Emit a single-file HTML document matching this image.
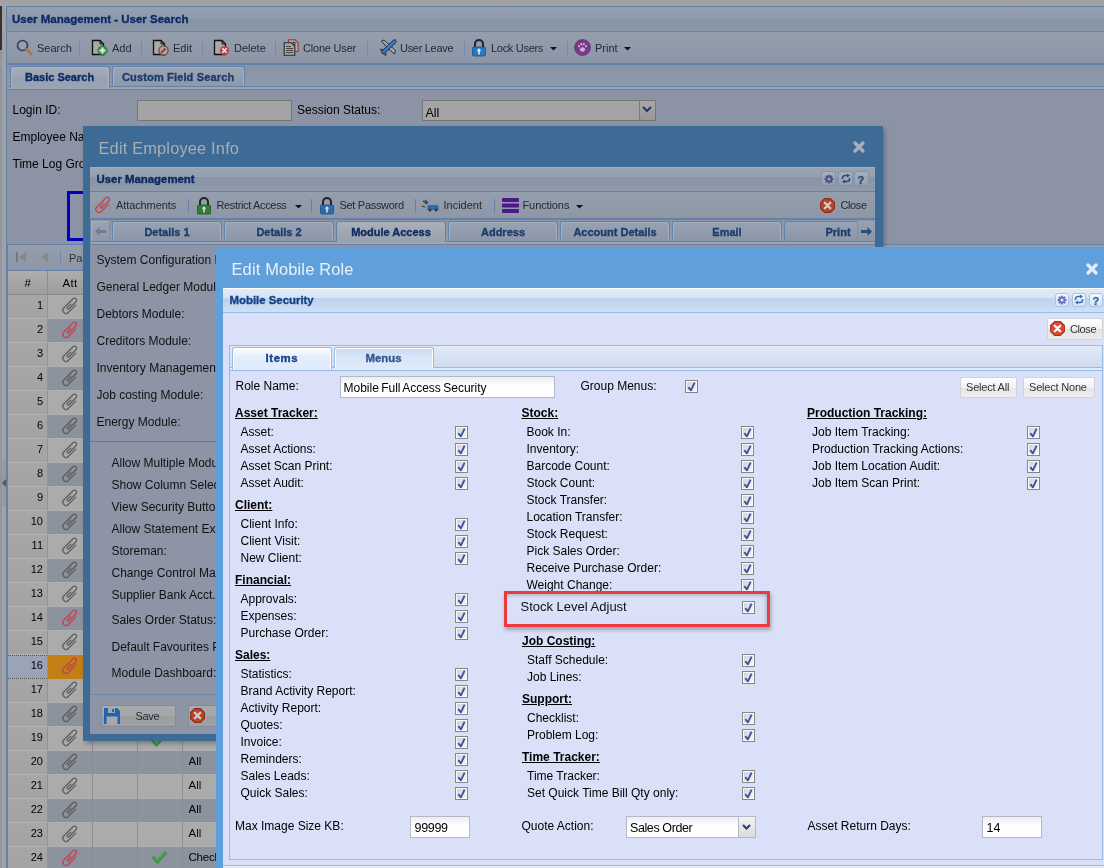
<!DOCTYPE html>
<html><head><meta charset="utf-8">
<style>
*{box-sizing:border-box;margin:0;padding:0}
html,body{width:1104px;height:868px;overflow:hidden;background:#a2a2a2;font-family:"Liberation Sans",sans-serif;position:relative}
.a{position:absolute}
.t{position:absolute;white-space:nowrap;color:#000}
svg{position:absolute;overflow:visible}
</style></head><body><div style="position:absolute;left:0;top:0;width:1104px;height:868px;overflow:hidden;will-change:transform">

<div class="a" style="left:0px;top:6px;width:2px;height:44px;background:#333"></div>
<div class="a" style="left:0px;top:50px;width:2px;height:818px;background:#8d95a6"></div>
<div class="a" style="left:2px;top:459px;width:4px;height:47px;background:#9a9a9a"></div>
<svg style="left:2px;top:478px;" width="4" height="10" viewBox="0 0 4 10"><path d="M0 5 L4 1 V9 Z" fill="#555"/></svg>
<div class="a" style="left:6px;top:6px;width:1098px;height:862px;background:#8b93a5;border-left:1px solid #6482a9;border-top:1px solid #6482a9"></div>
<div class="a" style="left:7px;top:7px;width:1097px;height:25px;background:linear-gradient(#959fae,#8f9aab 50%,#8694a7 52%,#8d98aa);border-bottom:1px solid #6482a9"></div>
<div class="t " style="left:12px;top:12.02px;font-size:11.5px;line-height:14px;font-weight:bold;-webkit-text-stroke:.35px #0b2c66;color:#0b2c66;">User Management - User Search</div>
<div class="a" style="left:7px;top:32px;width:1097px;height:31px;background:linear-gradient(#949eac,#8c96a7)"></div>
<div class="a" style="left:7px;top:63px;width:1097px;height:2px;background:#6482a9"></div>
<svg style="left:16px;top:39px;" width="16" height="16" viewBox="0 0 16 16"><circle cx="6.5" cy="6.5" r="5" fill="#9aa0aa" stroke="#2c3a66" stroke-width="1.6"/><line x1="10.5" y1="10.5" x2="15" y2="15" stroke="#a87a40" stroke-width="3" stroke-linecap="round"/></svg>
<div class="t " style="left:37px;top:40.99px;font-size:11px;line-height:14px;color:#262a30;">Search</div>
<div class="a" style="left:79px;top:41px;width:1px;height:14px;background:#6d8ab0"></div>
<svg style="left:91px;top:39px;" width="16" height="17" viewBox="0 0 16 17"><path d="M1.5 1.5 H9 L12.5 5 V15.5 H1.5 Z" fill="#a9a9a9" stroke="#111" stroke-width="1.3"/><path d="M9 1.5 V5 H12.5" fill="none" stroke="#111" stroke-width="1"/><circle cx="11.5" cy="11.5" r="4.6" fill="#3a9a48" stroke="#1f6e2a" stroke-width=".8"/><path d="M11.5 8.5 V14.5 M8.5 11.5 H14.5" stroke="#e8e8e8" stroke-width="2"/></svg>
<div class="t " style="left:112px;top:40.99px;font-size:11px;line-height:14px;color:#262a30;">Add</div>
<div class="a" style="left:141px;top:41px;width:1px;height:14px;background:#6d8ab0"></div>
<svg style="left:152px;top:39px;" width="16" height="17" viewBox="0 0 16 17"><path d="M1.5 1.5 H9 L12.5 5 V15.5 H1.5 Z" fill="#a9a9a9" stroke="#111" stroke-width="1.3"/><path d="M9 1.5 V5 H12.5" fill="none" stroke="#111" stroke-width="1"/><circle cx="11.5" cy="11.5" r="4.6" fill="#a9a9a9" stroke="#5a4a4a" stroke-width="1.2"/><path d="M9 14 L13.5 9.5" stroke="#b03a2a" stroke-width="2.2"/></svg>
<div class="t " style="left:173px;top:40.99px;font-size:11px;line-height:14px;color:#262a30;">Edit</div>
<div class="a" style="left:202px;top:41px;width:1px;height:14px;background:#6d8ab0"></div>
<svg style="left:213px;top:39px;" width="16" height="17" viewBox="0 0 16 17"><path d="M1.5 1.5 H9 L12.5 5 V15.5 H1.5 Z" fill="#a9a9a9" stroke="#111" stroke-width="1.3"/><path d="M9 1.5 V5 H12.5" fill="none" stroke="#111" stroke-width="1"/><circle cx="11.5" cy="11.5" r="4.6" fill="#c0404a"/><path d="M9.3 9.3 L13.7 13.7 M13.7 9.3 L9.3 13.7" stroke="#e8e8e8" stroke-width="1.6"/></svg>
<div class="t " style="left:234px;top:40.99px;font-size:11px;line-height:14px;color:#262a30;">Delete</div>
<div class="a" style="left:275px;top:41px;width:1px;height:14px;background:#6d8ab0"></div>
<svg style="left:283px;top:39px;" width="16" height="17" viewBox="0 0 16 17"><path d="M5.5 .8 H12 L15.2 4 V12.5 H5.5 Z" fill="#a9a9a9" stroke="#b03038" stroke-width="1.1"/><path d="M1.2 3.8 H8.5 L11.8 7 V16.2 H1.2 Z" fill="#a5a5a5" stroke="#2a2a2a" stroke-width="1.1"/><path d="M3 7.5 H8 M3 9.5 H10 M3 11.5 H10 M3 13.5 H10" stroke="#3a3a3a" stroke-width=".9"/><circle cx="11" cy="4.5" r="1.3" fill="none" stroke="#222" stroke-width=".9"/></svg>
<div class="t " style="left:303px;top:40.99px;font-size:11px;line-height:14px;color:#262a30;letter-spacing:-.2px">Clone User</div>
<div class="a" style="left:367px;top:41px;width:1px;height:14px;background:#6d8ab0"></div>
<svg style="left:375px;top:35px;" width="25" height="25" viewBox="0 0 25 25"><path d="M6.5 6 L9 5 L14.5 10 L20.5 15.5 L19.5 19 L12.5 13 Z" fill="#a0aab2" stroke="#222" stroke-width=".9" stroke-linejoin="round"/><path d="M5.3 14.5 L7 14 L9.5 16.5 L11.3 19.8 L10 20.5 L7.5 17.5 Z" fill="#a0aab2" stroke="#222" stroke-width=".9" stroke-linejoin="round"/><path d="M8.5 17 L19.5 6.5" stroke="#1a2a40" stroke-width="4.2" stroke-linecap="round"/><path d="M8.5 17 L19.5 6.5" stroke="#3d7cc4" stroke-width="2.6" stroke-linecap="round"/></svg>
<div class="t " style="left:400px;top:40.99px;font-size:11px;line-height:14px;color:#262a30;letter-spacing:-.3px">User Leave</div>
<div class="a" style="left:464px;top:41px;width:1px;height:14px;background:#6d8ab0"></div>
<svg style="left:471px;top:39px;" width="16" height="17" viewBox="0 0 16 17"><path d="M4 8 V5 A4 4 0 0 1 12 5 V8" fill="none" stroke="#222" stroke-width="2"/><rect x="1.5" y="8" width="13" height="9" rx="1.2" fill="#2a78c0" stroke="#1d4f86" stroke-width=".8"/><circle cx="8" cy="11.2" r="1.6" fill="#e6e6e6"/><rect x="7.2" y="11.5" width="1.6" height="4" fill="#e6e6e6"/></svg>
<div class="t " style="left:491px;top:40.99px;font-size:11px;line-height:14px;color:#262a30;letter-spacing:-.3px">Lock Users</div>
<svg style="left:550px;top:47px;" width="7" height="4" viewBox="0 0 7 4"><path d="M0 0 H7 L3.5 3.5 Z" fill="#111"/></svg>
<div class="a" style="left:567px;top:41px;width:1px;height:14px;background:#6d8ab0"></div>
<svg style="left:574px;top:39px;" width="17" height="17" viewBox="0 0 17 17"><circle cx="8.5" cy="8.5" r="8" fill="#7a3a8a" stroke="#5a2a6a" stroke-width=".6"/><ellipse cx="8.5" cy="10.5" rx="2.6" ry="2.2" fill="#c8b0d0"/><circle cx="5" cy="7.2" r="1.1" fill="#c8b0d0"/><circle cx="7.3" cy="5.2" r="1.1" fill="#c8b0d0"/><circle cx="9.8" cy="5.2" r="1.1" fill="#c8b0d0"/><circle cx="12" cy="7.2" r="1.1" fill="#c8b0d0"/></svg>
<div class="t " style="left:595px;top:40.99px;font-size:11px;line-height:14px;color:#262a30;">Print</div>
<svg style="left:624px;top:47px;" width="7" height="4" viewBox="0 0 7 4"><path d="M0 0 H7 L3.5 3.5 Z" fill="#111"/></svg>
<div class="a" style="left:7px;top:65px;width:1097px;height:21px;background:linear-gradient(#8893a6,#8f9aab)"></div>
<div class="a" style="left:7px;top:86px;width:1097px;height:1px;background:#6482a9"></div>
<div class="a" style="left:7px;top:87px;width:1097px;height:2px;background:#9aa3b2"></div>
<div class="a" style="left:7px;top:89px;width:1097px;height:1px;background:#6482a9"></div>
<div class="a" style="left:10px;top:66px;width:100px;height:22px;background:linear-gradient(#a6aeba,#98a1b2 60%,#9aa3b2);border:1px solid #6482a9;border-bottom:none;border-radius:3px 3px 0 0;box-shadow:inset 1px 1px 0 #b0b4ba,inset -1px 0 0 #b0b4ba"></div>
<div class="t " style="left:25px;top:70.19px;font-size:11px;line-height:14px;font-weight:bold;-webkit-text-stroke:.35px #0b2c66;color:#0b2c66;">Basic Search</div>
<div class="a" style="left:112px;top:66px;width:133px;height:20px;background:linear-gradient(#9ba5b4,#8d98aa);border:1px solid #6482a9;border-bottom:none;border-radius:3px 3px 0 0;box-shadow:inset 1px 1px 0 #aab0b9,inset -1px 0 0 #aab0b9"></div>
<div class="t " style="left:122px;top:70.19px;font-size:11px;line-height:14px;font-weight:bold;-webkit-text-stroke:.35px #1d3c6c;color:#1d3c6c;letter-spacing:.15px">Custom Field Search</div>
<div class="t " style="left:12.5px;top:103.34px;font-size:12px;line-height:15px;color:#000;">Login ID:</div>
<div class="a" style="left:137px;top:100px;width:155px;height:21px;background:#a4a4a4;border:1px solid #767676"></div>
<div class="t " style="left:297px;top:103.34px;font-size:12px;line-height:15px;color:#000;">Session Status:</div>
<div class="a" style="left:422px;top:100px;width:234px;height:21px;background:#a4a4a4;border:1px solid #767676"></div>
<div class="t " style="left:425.5px;top:104.67px;font-size:12.5px;line-height:16px;color:#000;">All</div>
<div class="a" style="left:639px;top:101px;width:16px;height:19px;background:linear-gradient(#a8a8a8,#979797);border-left:1px solid #7a7a7a"></div>
<svg style="left:643px;top:107px;" width="8" height="5" viewBox="0 0 8 5"><path d="M0 0 L4 4 L8 0" fill="none" stroke="#1e3566" stroke-width="2"/></svg>
<div class="t " style="left:12.5px;top:130.34px;font-size:12px;line-height:15px;color:#000;">Employee Name:</div>
<div class="t " style="left:12.5px;top:157.34px;font-size:12px;line-height:15px;color:#000;">Time Log Group:</div>
<div class="a" style="left:67px;top:191px;width:60px;height:50px;border:3px solid #0000bf"></div>
<div class="a" style="left:7px;top:244px;width:1097px;height:27px;background:linear-gradient(#949eac,#8c96a7);border-top:1px solid #6482a9;border-bottom:1px solid #6482a9"></div>
<svg style="left:16px;top:252px;" width="10" height="10" viewBox="0 0 10 10"><rect x="0" y="0" width="2" height="10" fill="#777"/><path d="M10 0 V10 L3 5 Z" fill="#888"/></svg>
<svg style="left:41px;top:252px;" width="7" height="10" viewBox="0 0 7 10"><path d="M7 0 V10 L0 5 Z" fill="#888"/></svg>
<div class="a" style="left:60px;top:251px;width:1px;height:14px;background:#6d8ab0"></div>
<div class="t " style="left:69px;top:251.19px;font-size:11px;line-height:14px;color:#333;">Page</div>
<div class="a" style="left:7px;top:271px;width:1097px;height:24px;background:linear-gradient(#aeaeae,#9d9d9d);border-bottom:1px solid #8a8a8a"></div>
<div class="t " style="left:24.5px;top:276.02px;font-size:11.5px;line-height:14px;color:#000;">#</div>
<div class="t " style="left:62.5px;top:276.02px;font-size:11.5px;line-height:14px;color:#000;letter-spacing:.3px">Att</div>
<div class="a" style="left:47px;top:271px;width:1px;height:24px;background:#8d8d8d"></div>
<div class="a" style="left:92px;top:271px;width:1px;height:24px;background:#8d8d8d"></div>
<div class="a" style="left:7px;top:295px;width:1097px;height:24px;background:#ababab;border-bottom:1px solid #b0b0b0"></div>
<div class="a" style="left:7px;top:295px;width:40px;height:24px;background:linear-gradient(#a7a7a7,#a3a3a3);border-bottom:1px solid #b2b2b2"></div>
<div class="a" style="left:47px;top:295px;width:1px;height:24px;background:#939393"></div>
<div class="t" style="left:7px;width:36px;text-align:right;top:299px;font-size:11px;line-height:13px;color:#000">1</div>
<svg style="left:58px;top:295px;" width="24" height="24" viewBox="0 0 24 24"><g transform="translate(12.3 11) rotate(-45)"><path d="M4.4 3.2 L-6 3.2 A3.2 3.2 0 0 1 -6 -3.2 L7 -3.2 A2.1 2.1 0 0 1 7 1 L-3 1 A1 1 0 0 1 -3 -1 L1.6 -1" fill="none" stroke="#5c5c5c" stroke-width="1.25" stroke-linecap="round"/></g></svg>
<div class="a" style="left:7px;top:319px;width:1097px;height:24px;background:#8c929e;border-bottom:1px solid #b0b0b0"></div>
<div class="a" style="left:7px;top:319px;width:40px;height:24px;background:linear-gradient(#a7a7a7,#a3a3a3);border-bottom:1px solid #b2b2b2"></div>
<div class="a" style="left:47px;top:319px;width:1px;height:24px;background:#939393"></div>
<div class="t" style="left:7px;width:36px;text-align:right;top:323px;font-size:11px;line-height:13px;color:#000">2</div>
<svg style="left:58px;top:319px;" width="24" height="24" viewBox="0 0 24 24"><g transform="translate(12.3 11) rotate(-45)"><path d="M4.4 3.2 L-6 3.2 A3.2 3.2 0 0 1 -6 -3.2 L7 -3.2 A2.1 2.1 0 0 1 7 1 L-3 1 A1 1 0 0 1 -3 -1 L1.6 -1" fill="none" stroke="#c0444c" stroke-width="1.25" stroke-linecap="round"/></g></svg>
<div class="a" style="left:7px;top:343px;width:1097px;height:24px;background:#ababab;border-bottom:1px solid #b0b0b0"></div>
<div class="a" style="left:7px;top:343px;width:40px;height:24px;background:linear-gradient(#a7a7a7,#a3a3a3);border-bottom:1px solid #b2b2b2"></div>
<div class="a" style="left:47px;top:343px;width:1px;height:24px;background:#939393"></div>
<div class="t" style="left:7px;width:36px;text-align:right;top:347px;font-size:11px;line-height:13px;color:#000">3</div>
<svg style="left:58px;top:343px;" width="24" height="24" viewBox="0 0 24 24"><g transform="translate(12.3 11) rotate(-45)"><path d="M4.4 3.2 L-6 3.2 A3.2 3.2 0 0 1 -6 -3.2 L7 -3.2 A2.1 2.1 0 0 1 7 1 L-3 1 A1 1 0 0 1 -3 -1 L1.6 -1" fill="none" stroke="#5c5c5c" stroke-width="1.25" stroke-linecap="round"/></g></svg>
<div class="a" style="left:7px;top:367px;width:1097px;height:24px;background:#8c929e;border-bottom:1px solid #b0b0b0"></div>
<div class="a" style="left:7px;top:367px;width:40px;height:24px;background:linear-gradient(#a7a7a7,#a3a3a3);border-bottom:1px solid #b2b2b2"></div>
<div class="a" style="left:47px;top:367px;width:1px;height:24px;background:#939393"></div>
<div class="t" style="left:7px;width:36px;text-align:right;top:371px;font-size:11px;line-height:13px;color:#000">4</div>
<svg style="left:58px;top:367px;" width="24" height="24" viewBox="0 0 24 24"><g transform="translate(12.3 11) rotate(-45)"><path d="M4.4 3.2 L-6 3.2 A3.2 3.2 0 0 1 -6 -3.2 L7 -3.2 A2.1 2.1 0 0 1 7 1 L-3 1 A1 1 0 0 1 -3 -1 L1.6 -1" fill="none" stroke="#5c5c5c" stroke-width="1.25" stroke-linecap="round"/></g></svg>
<div class="a" style="left:7px;top:391px;width:1097px;height:24px;background:#ababab;border-bottom:1px solid #b0b0b0"></div>
<div class="a" style="left:7px;top:391px;width:40px;height:24px;background:linear-gradient(#a7a7a7,#a3a3a3);border-bottom:1px solid #b2b2b2"></div>
<div class="a" style="left:47px;top:391px;width:1px;height:24px;background:#939393"></div>
<div class="t" style="left:7px;width:36px;text-align:right;top:395px;font-size:11px;line-height:13px;color:#000">5</div>
<svg style="left:58px;top:391px;" width="24" height="24" viewBox="0 0 24 24"><g transform="translate(12.3 11) rotate(-45)"><path d="M4.4 3.2 L-6 3.2 A3.2 3.2 0 0 1 -6 -3.2 L7 -3.2 A2.1 2.1 0 0 1 7 1 L-3 1 A1 1 0 0 1 -3 -1 L1.6 -1" fill="none" stroke="#5c5c5c" stroke-width="1.25" stroke-linecap="round"/></g></svg>
<div class="a" style="left:7px;top:415px;width:1097px;height:24px;background:#8c929e;border-bottom:1px solid #b0b0b0"></div>
<div class="a" style="left:7px;top:415px;width:40px;height:24px;background:linear-gradient(#a7a7a7,#a3a3a3);border-bottom:1px solid #b2b2b2"></div>
<div class="a" style="left:47px;top:415px;width:1px;height:24px;background:#939393"></div>
<div class="t" style="left:7px;width:36px;text-align:right;top:419px;font-size:11px;line-height:13px;color:#000">6</div>
<svg style="left:58px;top:415px;" width="24" height="24" viewBox="0 0 24 24"><g transform="translate(12.3 11) rotate(-45)"><path d="M4.4 3.2 L-6 3.2 A3.2 3.2 0 0 1 -6 -3.2 L7 -3.2 A2.1 2.1 0 0 1 7 1 L-3 1 A1 1 0 0 1 -3 -1 L1.6 -1" fill="none" stroke="#5c5c5c" stroke-width="1.25" stroke-linecap="round"/></g></svg>
<div class="a" style="left:7px;top:439px;width:1097px;height:24px;background:#ababab;border-bottom:1px solid #b0b0b0"></div>
<div class="a" style="left:7px;top:439px;width:40px;height:24px;background:linear-gradient(#a7a7a7,#a3a3a3);border-bottom:1px solid #b2b2b2"></div>
<div class="a" style="left:47px;top:439px;width:1px;height:24px;background:#939393"></div>
<div class="t" style="left:7px;width:36px;text-align:right;top:443px;font-size:11px;line-height:13px;color:#000">7</div>
<svg style="left:58px;top:439px;" width="24" height="24" viewBox="0 0 24 24"><g transform="translate(12.3 11) rotate(-45)"><path d="M4.4 3.2 L-6 3.2 A3.2 3.2 0 0 1 -6 -3.2 L7 -3.2 A2.1 2.1 0 0 1 7 1 L-3 1 A1 1 0 0 1 -3 -1 L1.6 -1" fill="none" stroke="#5c5c5c" stroke-width="1.25" stroke-linecap="round"/></g></svg>
<div class="a" style="left:7px;top:463px;width:1097px;height:24px;background:#8c929e;border-bottom:1px solid #b0b0b0"></div>
<div class="a" style="left:7px;top:463px;width:40px;height:24px;background:linear-gradient(#a7a7a7,#a3a3a3);border-bottom:1px solid #b2b2b2"></div>
<div class="a" style="left:47px;top:463px;width:1px;height:24px;background:#939393"></div>
<div class="t" style="left:7px;width:36px;text-align:right;top:467px;font-size:11px;line-height:13px;color:#000">8</div>
<svg style="left:58px;top:463px;" width="24" height="24" viewBox="0 0 24 24"><g transform="translate(12.3 11) rotate(-45)"><path d="M4.4 3.2 L-6 3.2 A3.2 3.2 0 0 1 -6 -3.2 L7 -3.2 A2.1 2.1 0 0 1 7 1 L-3 1 A1 1 0 0 1 -3 -1 L1.6 -1" fill="none" stroke="#5c5c5c" stroke-width="1.25" stroke-linecap="round"/></g></svg>
<div class="a" style="left:7px;top:487px;width:1097px;height:24px;background:#ababab;border-bottom:1px solid #b0b0b0"></div>
<div class="a" style="left:7px;top:487px;width:40px;height:24px;background:linear-gradient(#a7a7a7,#a3a3a3);border-bottom:1px solid #b2b2b2"></div>
<div class="a" style="left:47px;top:487px;width:1px;height:24px;background:#939393"></div>
<div class="t" style="left:7px;width:36px;text-align:right;top:491px;font-size:11px;line-height:13px;color:#000">9</div>
<svg style="left:58px;top:487px;" width="24" height="24" viewBox="0 0 24 24"><g transform="translate(12.3 11) rotate(-45)"><path d="M4.4 3.2 L-6 3.2 A3.2 3.2 0 0 1 -6 -3.2 L7 -3.2 A2.1 2.1 0 0 1 7 1 L-3 1 A1 1 0 0 1 -3 -1 L1.6 -1" fill="none" stroke="#5c5c5c" stroke-width="1.25" stroke-linecap="round"/></g></svg>
<div class="a" style="left:7px;top:511px;width:1097px;height:24px;background:#8c929e;border-bottom:1px solid #b0b0b0"></div>
<div class="a" style="left:7px;top:511px;width:40px;height:24px;background:linear-gradient(#a7a7a7,#a3a3a3);border-bottom:1px solid #b2b2b2"></div>
<div class="a" style="left:47px;top:511px;width:1px;height:24px;background:#939393"></div>
<div class="t" style="left:7px;width:36px;text-align:right;top:515px;font-size:11px;line-height:13px;color:#000">10</div>
<svg style="left:58px;top:511px;" width="24" height="24" viewBox="0 0 24 24"><g transform="translate(12.3 11) rotate(-45)"><path d="M4.4 3.2 L-6 3.2 A3.2 3.2 0 0 1 -6 -3.2 L7 -3.2 A2.1 2.1 0 0 1 7 1 L-3 1 A1 1 0 0 1 -3 -1 L1.6 -1" fill="none" stroke="#5c5c5c" stroke-width="1.25" stroke-linecap="round"/></g></svg>
<div class="a" style="left:7px;top:535px;width:1097px;height:24px;background:#ababab;border-bottom:1px solid #b0b0b0"></div>
<div class="a" style="left:7px;top:535px;width:40px;height:24px;background:linear-gradient(#a7a7a7,#a3a3a3);border-bottom:1px solid #b2b2b2"></div>
<div class="a" style="left:47px;top:535px;width:1px;height:24px;background:#939393"></div>
<div class="t" style="left:7px;width:36px;text-align:right;top:539px;font-size:11px;line-height:13px;color:#000">11</div>
<svg style="left:58px;top:535px;" width="24" height="24" viewBox="0 0 24 24"><g transform="translate(12.3 11) rotate(-45)"><path d="M4.4 3.2 L-6 3.2 A3.2 3.2 0 0 1 -6 -3.2 L7 -3.2 A2.1 2.1 0 0 1 7 1 L-3 1 A1 1 0 0 1 -3 -1 L1.6 -1" fill="none" stroke="#5c5c5c" stroke-width="1.25" stroke-linecap="round"/></g></svg>
<div class="a" style="left:7px;top:559px;width:1097px;height:24px;background:#8c929e;border-bottom:1px solid #b0b0b0"></div>
<div class="a" style="left:7px;top:559px;width:40px;height:24px;background:linear-gradient(#a7a7a7,#a3a3a3);border-bottom:1px solid #b2b2b2"></div>
<div class="a" style="left:47px;top:559px;width:1px;height:24px;background:#939393"></div>
<div class="t" style="left:7px;width:36px;text-align:right;top:563px;font-size:11px;line-height:13px;color:#000">12</div>
<svg style="left:58px;top:559px;" width="24" height="24" viewBox="0 0 24 24"><g transform="translate(12.3 11) rotate(-45)"><path d="M4.4 3.2 L-6 3.2 A3.2 3.2 0 0 1 -6 -3.2 L7 -3.2 A2.1 2.1 0 0 1 7 1 L-3 1 A1 1 0 0 1 -3 -1 L1.6 -1" fill="none" stroke="#5c5c5c" stroke-width="1.25" stroke-linecap="round"/></g></svg>
<div class="a" style="left:7px;top:583px;width:1097px;height:24px;background:#ababab;border-bottom:1px solid #b0b0b0"></div>
<div class="a" style="left:7px;top:583px;width:40px;height:24px;background:linear-gradient(#a7a7a7,#a3a3a3);border-bottom:1px solid #b2b2b2"></div>
<div class="a" style="left:47px;top:583px;width:1px;height:24px;background:#939393"></div>
<div class="t" style="left:7px;width:36px;text-align:right;top:587px;font-size:11px;line-height:13px;color:#000">13</div>
<svg style="left:58px;top:583px;" width="24" height="24" viewBox="0 0 24 24"><g transform="translate(12.3 11) rotate(-45)"><path d="M4.4 3.2 L-6 3.2 A3.2 3.2 0 0 1 -6 -3.2 L7 -3.2 A2.1 2.1 0 0 1 7 1 L-3 1 A1 1 0 0 1 -3 -1 L1.6 -1" fill="none" stroke="#5c5c5c" stroke-width="1.25" stroke-linecap="round"/></g></svg>
<div class="a" style="left:7px;top:607px;width:1097px;height:24px;background:#8c929e;border-bottom:1px solid #b0b0b0"></div>
<div class="a" style="left:7px;top:607px;width:40px;height:24px;background:linear-gradient(#a7a7a7,#a3a3a3);border-bottom:1px solid #b2b2b2"></div>
<div class="a" style="left:47px;top:607px;width:1px;height:24px;background:#939393"></div>
<div class="t" style="left:7px;width:36px;text-align:right;top:611px;font-size:11px;line-height:13px;color:#000">14</div>
<svg style="left:58px;top:607px;" width="24" height="24" viewBox="0 0 24 24"><g transform="translate(12.3 11) rotate(-45)"><path d="M4.4 3.2 L-6 3.2 A3.2 3.2 0 0 1 -6 -3.2 L7 -3.2 A2.1 2.1 0 0 1 7 1 L-3 1 A1 1 0 0 1 -3 -1 L1.6 -1" fill="none" stroke="#c0444c" stroke-width="1.25" stroke-linecap="round"/></g></svg>
<div class="a" style="left:7px;top:631px;width:1097px;height:24px;background:#ababab;border-bottom:1px solid #b0b0b0"></div>
<div class="a" style="left:7px;top:631px;width:40px;height:24px;background:linear-gradient(#a7a7a7,#a3a3a3);border-bottom:1px solid #b2b2b2"></div>
<div class="a" style="left:47px;top:631px;width:1px;height:24px;background:#939393"></div>
<div class="t" style="left:7px;width:36px;text-align:right;top:635px;font-size:11px;line-height:13px;color:#000">15</div>
<svg style="left:58px;top:631px;" width="24" height="24" viewBox="0 0 24 24"><g transform="translate(12.3 11) rotate(-45)"><path d="M4.4 3.2 L-6 3.2 A3.2 3.2 0 0 1 -6 -3.2 L7 -3.2 A2.1 2.1 0 0 1 7 1 L-3 1 A1 1 0 0 1 -3 -1 L1.6 -1" fill="none" stroke="#5c5c5c" stroke-width="1.25" stroke-linecap="round"/></g></svg>
<div class="a" style="left:7px;top:655px;width:1097px;height:24px;background:#8c929e;border-bottom:1px solid #b0b0b0"></div>
<div class="a" style="left:7px;top:655px;width:40px;height:24px;background:#9aa4b6;border-top:1px dotted #555;border-bottom:1px dotted #555"></div>
<div class="a" style="left:47px;top:655px;width:1px;height:24px;background:#939393"></div>
<div class="a" style="left:48px;top:655px;width:44px;height:24px;background:#c27f16"></div>
<div class="t" style="left:7px;width:36px;text-align:right;top:659px;font-size:11px;line-height:13px;color:#000">16</div>
<svg style="left:58px;top:655px;" width="24" height="24" viewBox="0 0 24 24"><g transform="translate(12.3 11) rotate(-45)"><path d="M4.4 3.2 L-6 3.2 A3.2 3.2 0 0 1 -6 -3.2 L7 -3.2 A2.1 2.1 0 0 1 7 1 L-3 1 A1 1 0 0 1 -3 -1 L1.6 -1" fill="none" stroke="#c0444c" stroke-width="1.25" stroke-linecap="round"/></g></svg>
<div class="a" style="left:7px;top:679px;width:1097px;height:24px;background:#ababab;border-bottom:1px solid #b0b0b0"></div>
<div class="a" style="left:7px;top:679px;width:40px;height:24px;background:linear-gradient(#a7a7a7,#a3a3a3);border-bottom:1px solid #b2b2b2"></div>
<div class="a" style="left:47px;top:679px;width:1px;height:24px;background:#939393"></div>
<div class="t" style="left:7px;width:36px;text-align:right;top:683px;font-size:11px;line-height:13px;color:#000">17</div>
<svg style="left:58px;top:679px;" width="24" height="24" viewBox="0 0 24 24"><g transform="translate(12.3 11) rotate(-45)"><path d="M4.4 3.2 L-6 3.2 A3.2 3.2 0 0 1 -6 -3.2 L7 -3.2 A2.1 2.1 0 0 1 7 1 L-3 1 A1 1 0 0 1 -3 -1 L1.6 -1" fill="none" stroke="#5c5c5c" stroke-width="1.25" stroke-linecap="round"/></g></svg>
<div class="a" style="left:7px;top:703px;width:1097px;height:24px;background:#8c929e;border-bottom:1px solid #b0b0b0"></div>
<div class="a" style="left:7px;top:703px;width:40px;height:24px;background:linear-gradient(#a7a7a7,#a3a3a3);border-bottom:1px solid #b2b2b2"></div>
<div class="a" style="left:47px;top:703px;width:1px;height:24px;background:#939393"></div>
<div class="t" style="left:7px;width:36px;text-align:right;top:707px;font-size:11px;line-height:13px;color:#000">18</div>
<svg style="left:58px;top:703px;" width="24" height="24" viewBox="0 0 24 24"><g transform="translate(12.3 11) rotate(-45)"><path d="M4.4 3.2 L-6 3.2 A3.2 3.2 0 0 1 -6 -3.2 L7 -3.2 A2.1 2.1 0 0 1 7 1 L-3 1 A1 1 0 0 1 -3 -1 L1.6 -1" fill="none" stroke="#5c5c5c" stroke-width="1.25" stroke-linecap="round"/></g></svg>
<div class="a" style="left:7px;top:727px;width:1097px;height:24px;background:#ababab;border-bottom:1px solid #b0b0b0"></div>
<div class="a" style="left:7px;top:727px;width:40px;height:24px;background:linear-gradient(#a7a7a7,#a3a3a3);border-bottom:1px solid #b2b2b2"></div>
<div class="a" style="left:47px;top:727px;width:1px;height:24px;background:#939393"></div>
<div class="t" style="left:7px;width:36px;text-align:right;top:731px;font-size:11px;line-height:13px;color:#000">19</div>
<svg style="left:58px;top:727px;" width="24" height="24" viewBox="0 0 24 24"><g transform="translate(12.3 11) rotate(-45)"><path d="M4.4 3.2 L-6 3.2 A3.2 3.2 0 0 1 -6 -3.2 L7 -3.2 A2.1 2.1 0 0 1 7 1 L-3 1 A1 1 0 0 1 -3 -1 L1.6 -1" fill="none" stroke="#5c5c5c" stroke-width="1.25" stroke-linecap="round"/></g></svg>
<div class="a" style="left:92px;top:727px;width:1px;height:24px;background:#8d8d8d"></div>
<div class="a" style="left:137px;top:727px;width:1px;height:24px;background:#8d8d8d"></div>
<div class="a" style="left:182px;top:727px;width:1px;height:24px;background:#8d8d8d"></div>
<div class="a" style="left:7px;top:751px;width:1097px;height:24px;background:#8c929e;border-bottom:1px solid #b0b0b0"></div>
<div class="a" style="left:7px;top:751px;width:40px;height:24px;background:linear-gradient(#a7a7a7,#a3a3a3);border-bottom:1px solid #b2b2b2"></div>
<div class="a" style="left:47px;top:751px;width:1px;height:24px;background:#939393"></div>
<div class="t" style="left:7px;width:36px;text-align:right;top:755px;font-size:11px;line-height:13px;color:#000">20</div>
<svg style="left:58px;top:751px;" width="24" height="24" viewBox="0 0 24 24"><g transform="translate(12.3 11) rotate(-45)"><path d="M4.4 3.2 L-6 3.2 A3.2 3.2 0 0 1 -6 -3.2 L7 -3.2 A2.1 2.1 0 0 1 7 1 L-3 1 A1 1 0 0 1 -3 -1 L1.6 -1" fill="none" stroke="#5c5c5c" stroke-width="1.25" stroke-linecap="round"/></g></svg>
<div class="a" style="left:92px;top:751px;width:1px;height:24px;background:#8d8d8d"></div>
<div class="a" style="left:137px;top:751px;width:1px;height:24px;background:#8d8d8d"></div>
<div class="a" style="left:182px;top:751px;width:1px;height:24px;background:#8d8d8d"></div>
<div class="a" style="left:7px;top:775px;width:1097px;height:24px;background:#ababab;border-bottom:1px solid #b0b0b0"></div>
<div class="a" style="left:7px;top:775px;width:40px;height:24px;background:linear-gradient(#a7a7a7,#a3a3a3);border-bottom:1px solid #b2b2b2"></div>
<div class="a" style="left:47px;top:775px;width:1px;height:24px;background:#939393"></div>
<div class="t" style="left:7px;width:36px;text-align:right;top:779px;font-size:11px;line-height:13px;color:#000">21</div>
<svg style="left:58px;top:775px;" width="24" height="24" viewBox="0 0 24 24"><g transform="translate(12.3 11) rotate(-45)"><path d="M4.4 3.2 L-6 3.2 A3.2 3.2 0 0 1 -6 -3.2 L7 -3.2 A2.1 2.1 0 0 1 7 1 L-3 1 A1 1 0 0 1 -3 -1 L1.6 -1" fill="none" stroke="#5c5c5c" stroke-width="1.25" stroke-linecap="round"/></g></svg>
<div class="a" style="left:92px;top:775px;width:1px;height:24px;background:#8d8d8d"></div>
<div class="a" style="left:137px;top:775px;width:1px;height:24px;background:#8d8d8d"></div>
<div class="a" style="left:182px;top:775px;width:1px;height:24px;background:#8d8d8d"></div>
<div class="a" style="left:7px;top:799px;width:1097px;height:24px;background:#8c929e;border-bottom:1px solid #b0b0b0"></div>
<div class="a" style="left:7px;top:799px;width:40px;height:24px;background:linear-gradient(#a7a7a7,#a3a3a3);border-bottom:1px solid #b2b2b2"></div>
<div class="a" style="left:47px;top:799px;width:1px;height:24px;background:#939393"></div>
<div class="t" style="left:7px;width:36px;text-align:right;top:803px;font-size:11px;line-height:13px;color:#000">22</div>
<svg style="left:58px;top:799px;" width="24" height="24" viewBox="0 0 24 24"><g transform="translate(12.3 11) rotate(-45)"><path d="M4.4 3.2 L-6 3.2 A3.2 3.2 0 0 1 -6 -3.2 L7 -3.2 A2.1 2.1 0 0 1 7 1 L-3 1 A1 1 0 0 1 -3 -1 L1.6 -1" fill="none" stroke="#5c5c5c" stroke-width="1.25" stroke-linecap="round"/></g></svg>
<div class="a" style="left:92px;top:799px;width:1px;height:24px;background:#8d8d8d"></div>
<div class="a" style="left:137px;top:799px;width:1px;height:24px;background:#8d8d8d"></div>
<div class="a" style="left:182px;top:799px;width:1px;height:24px;background:#8d8d8d"></div>
<div class="a" style="left:7px;top:823px;width:1097px;height:24px;background:#ababab;border-bottom:1px solid #b0b0b0"></div>
<div class="a" style="left:7px;top:823px;width:40px;height:24px;background:linear-gradient(#a7a7a7,#a3a3a3);border-bottom:1px solid #b2b2b2"></div>
<div class="a" style="left:47px;top:823px;width:1px;height:24px;background:#939393"></div>
<div class="t" style="left:7px;width:36px;text-align:right;top:827px;font-size:11px;line-height:13px;color:#000">23</div>
<svg style="left:58px;top:823px;" width="24" height="24" viewBox="0 0 24 24"><g transform="translate(12.3 11) rotate(-45)"><path d="M4.4 3.2 L-6 3.2 A3.2 3.2 0 0 1 -6 -3.2 L7 -3.2 A2.1 2.1 0 0 1 7 1 L-3 1 A1 1 0 0 1 -3 -1 L1.6 -1" fill="none" stroke="#5c5c5c" stroke-width="1.25" stroke-linecap="round"/></g></svg>
<div class="a" style="left:92px;top:823px;width:1px;height:24px;background:#8d8d8d"></div>
<div class="a" style="left:137px;top:823px;width:1px;height:24px;background:#8d8d8d"></div>
<div class="a" style="left:182px;top:823px;width:1px;height:24px;background:#8d8d8d"></div>
<div class="a" style="left:7px;top:847px;width:1097px;height:24px;background:#8c929e;border-bottom:1px solid #b0b0b0"></div>
<div class="a" style="left:7px;top:847px;width:40px;height:24px;background:linear-gradient(#a7a7a7,#a3a3a3);border-bottom:1px solid #b2b2b2"></div>
<div class="a" style="left:47px;top:847px;width:1px;height:24px;background:#939393"></div>
<div class="t" style="left:7px;width:36px;text-align:right;top:851px;font-size:11px;line-height:13px;color:#000">24</div>
<svg style="left:58px;top:847px;" width="24" height="24" viewBox="0 0 24 24"><g transform="translate(12.3 11) rotate(-45)"><path d="M4.4 3.2 L-6 3.2 A3.2 3.2 0 0 1 -6 -3.2 L7 -3.2 A2.1 2.1 0 0 1 7 1 L-3 1 A1 1 0 0 1 -3 -1 L1.6 -1" fill="none" stroke="#c0444c" stroke-width="1.25" stroke-linecap="round"/></g></svg>
<div class="a" style="left:92px;top:847px;width:1px;height:24px;background:#8d8d8d"></div>
<div class="a" style="left:137px;top:847px;width:1px;height:24px;background:#8d8d8d"></div>
<div class="a" style="left:182px;top:847px;width:1px;height:24px;background:#8d8d8d"></div>
<div class="t " style="left:188.5px;top:753.52px;font-size:11.5px;line-height:14px;color:#000;">All</div>
<div class="t " style="left:188.5px;top:777.52px;font-size:11.5px;line-height:14px;color:#000;">All</div>
<div class="t " style="left:188.5px;top:801.52px;font-size:11.5px;line-height:14px;color:#000;">All</div>
<div class="t " style="left:188.5px;top:825.52px;font-size:11.5px;line-height:14px;color:#000;">All</div>
<div class="t " style="left:188.5px;top:849.52px;font-size:11.5px;line-height:14px;color:#000;letter-spacing:-.2px">Check</div>
<div class="a" style="left:7px;top:244px;width:1px;height:624px;background:#6482a9"></div>
<svg style="left:151px;top:733px;" width="15" height="13" viewBox="0 0 15 13"><path d="M1 7 L5.5 11.5 L14 2.5" fill="none" stroke="#2f8a2f" stroke-width="3"/><path d="M1.5 7 L5.5 11 L13.5 3" fill="none" stroke="#4cb04c" stroke-width="1.4"/></svg>
<svg style="left:152px;top:850px;" width="15" height="13" viewBox="0 0 15 13"><path d="M1 7 L5.5 11.5 L14 2.5" fill="none" stroke="#2f8a2f" stroke-width="3"/><path d="M1.5 7 L5.5 11 L13.5 3" fill="none" stroke="#4cb04c" stroke-width="1.4"/></svg>
<div class="a" style="left:83px;top:126px;width:800px;height:615px;background:#3e6a96;box-shadow:2px 3px 4px rgba(0,0,0,.25)"></div>
<div class="t " style="left:98.5px;top:137.82px;font-size:16.4px;line-height:20px;color:#a9aeb4;letter-spacing:.17px">Edit Employee Info</div>
<svg style="left:853px;top:141px;" width="12" height="12" viewBox="0 0 12 12"><path d="M2 2 L10 10 M10 2 L2 10" stroke="#aab0b7" stroke-width="3.3" stroke-linecap="round"/></svg>
<div class="a" style="left:90px;top:167px;width:785px;height:567px;background:#8d94a5;border-left:1px solid #7b90ad"></div>
<div class="a" style="left:90px;top:167px;width:785px;height:25px;background:linear-gradient(#9ba4b2,#959fae 40%,#8794a7 42%,#8f9aab);border-top:1px solid #a6adb8;border-bottom:1px solid #6482a9"></div>
<div class="t " style="left:96.5px;top:172.05px;font-size:11.4px;line-height:14px;font-weight:bold;-webkit-text-stroke:.35px #0b2a60;color:#0b2a60;">User Management</div>
<div class="a" style="left:821px;top:171px;width:15px;height:15px;background:linear-gradient(#a9b0bb,#97a0ae);border:1px solid #7f93b0;border-radius:3px"></div>
<div class="a" style="left:838px;top:171px;width:15px;height:15px;background:linear-gradient(#a9b0bb,#97a0ae);border:1px solid #7f93b0;border-radius:3px"></div>
<div class="a" style="left:854px;top:171px;width:15px;height:15px;background:linear-gradient(#a9b0bb,#97a0ae);border:1px solid #7f93b0;border-radius:3px"></div>
<svg style="left:824px;top:174px;" width="10" height="10" viewBox="0 0 10 10"><g fill="#4a4f86"><circle cx="5" cy="5" r="3.5"/><rect x="4.1" y=".4" width="1.8" height="2.4" rx=".6" transform="rotate(0 5 5)"/><rect x="4.1" y=".4" width="1.8" height="2.4" rx=".6" transform="rotate(45 5 5)"/><rect x="4.1" y=".4" width="1.8" height="2.4" rx=".6" transform="rotate(90 5 5)"/><rect x="4.1" y=".4" width="1.8" height="2.4" rx=".6" transform="rotate(135 5 5)"/><rect x="4.1" y=".4" width="1.8" height="2.4" rx=".6" transform="rotate(180 5 5)"/><rect x="4.1" y=".4" width="1.8" height="2.4" rx=".6" transform="rotate(225 5 5)"/><rect x="4.1" y=".4" width="1.8" height="2.4" rx=".6" transform="rotate(270 5 5)"/><rect x="4.1" y=".4" width="1.8" height="2.4" rx=".6" transform="rotate(315 5 5)"/></g><circle cx="5" cy="5" r="1.5" fill="#a2a9b5"/></svg>
<svg style="left:841px;top:174px;" width="10" height="10" viewBox="0 0 10 10"><path d="M1.5 5 V4 A2.5 2.5 0 0 1 4 1.5 H7" fill="none" stroke="#2a4a78" stroke-width="1.6"/><path d="M6 -.5 L9 1.5 L6 3.5 Z" fill="#2a4a78"/><path d="M8.5 4 V5 A2.5 2.5 0 0 1 6 7.5 H3" fill="none" stroke="#2a4a78" stroke-width="1.6"/><path d="M4 5.5 L1 7.5 L4 9.5 Z" fill="#2a4a78"/></svg>
<div class="t " style="left:857.5px;top:172.69px;font-size:11px;line-height:14px;font-weight:bold;-webkit-text-stroke:.35px #2a4a78;color:#2a4a78;">?</div>
<div class="a" style="left:90px;top:192px;width:785px;height:27px;background:linear-gradient(#959eac,#8d97a7);border-bottom:1px solid #6482a9"></div>
<svg style="left:91px;top:194px;" width="24" height="24" viewBox="0 0 24 24"><g transform="translate(12.3 11) rotate(-45)"><path d="M4.4 3.2 L-6 3.2 A3.2 3.2 0 0 1 -6 -3.2 L7 -3.2 A2.1 2.1 0 0 1 7 1 L-3 1 A1 1 0 0 1 -3 -1 L1.6 -1" fill="none" stroke="#c0444c" stroke-width="1.25" stroke-linecap="round"/></g></svg>
<div class="t " style="left:116px;top:198.19px;font-size:11px;line-height:14px;color:#262a30;letter-spacing:-.1px">Attachments</div>
<div class="a" style="left:188px;top:199px;width:1px;height:14px;background:#6482a9"></div>
<svg style="left:196px;top:197px;" width="16" height="17" viewBox="0 0 16 17"><path d="M4 8 V5 A4 4 0 0 1 12 5 V8" fill="none" stroke="#222" stroke-width="2"/><rect x="1.5" y="8" width="13" height="9" rx="1.2" fill="#2f7d3a" stroke="#1e5a28" stroke-width=".8"/><circle cx="8" cy="11.2" r="1.6" fill="#d8d8d8"/><rect x="7.2" y="11.5" width="1.6" height="4" fill="#d8d8d8"/></svg>
<div class="t " style="left:216.5px;top:198.19px;font-size:11px;line-height:14px;color:#262a30;letter-spacing:-.35px">Restrict Access</div>
<svg style="left:295px;top:205px;" width="7" height="4" viewBox="0 0 7 4"><path d="M0 0 H7 L3.5 3.5 Z" fill="#111"/></svg>
<div class="a" style="left:311px;top:199px;width:1px;height:14px;background:#6482a9"></div>
<svg style="left:319px;top:197px;" width="16" height="17" viewBox="0 0 16 17"><path d="M4 8 V5 A4 4 0 0 1 12 5 V8" fill="none" stroke="#222" stroke-width="2"/><rect x="1.5" y="8" width="13" height="9" rx="1.2" fill="#2a6cb0" stroke="#1d4f86" stroke-width=".8"/><circle cx="8" cy="11.2" r="1.6" fill="#d8d8d8"/><rect x="7.2" y="11.5" width="1.6" height="4" fill="#d8d8d8"/></svg>
<div class="t " style="left:339.5px;top:198.19px;font-size:11px;line-height:14px;color:#262a30;letter-spacing:-.3px">Set Password</div>
<div class="a" style="left:415px;top:199px;width:1px;height:14px;background:#6482a9"></div>
<svg style="left:422px;top:199px;" width="18" height="12" viewBox="0 0 18 12"><path d="M6 6 L16 6 L17 11 H5 Z" fill="#2a6cb0"/><circle cx="8" cy="11" r="1.5" fill="#333"/><circle cx="14" cy="11" r="1.5" fill="#333"/><path d="M1 2 L5 5 M3 1 L6 4 M0 7 L3 8" stroke="#333" stroke-width="1.1"/></svg>
<div class="t " style="left:443.5px;top:198.19px;font-size:11px;line-height:14px;color:#262a30;">Incident</div>
<div class="a" style="left:494px;top:199px;width:1px;height:14px;background:#6482a9"></div>
<svg style="left:502px;top:198px;" width="17" height="15" viewBox="0 0 17 15"><rect x="0" y="0" width="17" height="4" rx="1" fill="#50168a"/><rect x="0" y="5.5" width="17" height="4" rx="1" fill="#50168a"/><rect x="0" y="11" width="17" height="4" rx="1" fill="#50168a"/></svg>
<div class="t " style="left:522.5px;top:198.19px;font-size:11px;line-height:14px;color:#262a30;letter-spacing:-.1px">Functions</div>
<svg style="left:576px;top:205px;" width="7" height="4" viewBox="0 0 7 4"><path d="M0 0 H7 L3.5 3.5 Z" fill="#111"/></svg>
<svg style="left:820px;top:198px;" width="15" height="15" viewBox="0 0 15 15"><path d="M4.6 .6 H10.4 L14.4 4.6 V10.4 L10.4 14.4 H4.6 L.6 10.4 V4.6 Z" fill="#b8442e" stroke="#8a2e1c" stroke-width="1.1"/><path d="M4.8 4.8 L10.2 10.2 M10.2 4.8 L4.8 10.2" stroke="#d0d0d0" stroke-width="2.3" stroke-linecap="round"/></svg>
<div class="t " style="left:840.5px;top:198.19px;font-size:11px;line-height:14px;color:#262a30;letter-spacing:-.4px">Close</div>
<div class="a" style="left:90px;top:218px;width:785px;height:2px;background:#6482a9"></div>
<div class="a" style="left:90px;top:220px;width:785px;height:21px;background:linear-gradient(#8b96a8,#919bab)"></div>
<div class="a" style="left:90px;top:241px;width:785px;height:1px;background:#6482a9"></div>
<div class="a" style="left:90px;top:242px;width:785px;height:2px;background:#9ea6b3"></div>
<div class="a" style="left:90px;top:244px;width:785px;height:1px;background:#6482a9"></div>
<div class="a" style="left:90px;top:245px;width:785px;height:2px;background:#8d94a5"></div>
<div class="a" style="left:90px;top:218px;width:1px;height:29px;background:#6f87aa"></div>
<div class="a" style="left:91px;top:221px;width:19px;height:20px;background:linear-gradient(#9ca5b2,#8e98a8);border-right:1px solid #7c90ae;box-shadow:inset 1px 1px 0 #a6adb8"></div>
<svg style="left:95px;top:227px;" width="11" height="9" viewBox="0 0 11 9"><path d="M0 4.5 L4.5 0 V3 H11 V6 H4.5 V9 Z" fill="#6c7d98"/></svg>
<div class="a" style="left:112px;top:221px;width:110px;height:20px;background:linear-gradient(#98a2b2,#8b96a8);border:1px solid #6482a9;border-bottom:none;border-radius:3px 3px 0 0;box-shadow:inset 1px 1px 0 #a9b0bb,inset -1px 0 0 #a9b0bb"></div>
<div class="t " style="left:167px;top:225.19px;font-size:11px;line-height:14px;font-weight:bold;-webkit-text-stroke:.35px #1d3c6c;color:#1d3c6c;transform:translateX(-50%)">Details 1</div>
<div class="a" style="left:224px;top:221px;width:110px;height:20px;background:linear-gradient(#98a2b2,#8b96a8);border:1px solid #6482a9;border-bottom:none;border-radius:3px 3px 0 0;box-shadow:inset 1px 1px 0 #a9b0bb,inset -1px 0 0 #a9b0bb"></div>
<div class="t " style="left:279px;top:225.19px;font-size:11px;line-height:14px;font-weight:bold;-webkit-text-stroke:.35px #1d3c6c;color:#1d3c6c;transform:translateX(-50%)">Details 2</div>
<div class="a" style="left:336px;top:221px;width:110px;height:21px;background:linear-gradient(#abb1ba,#a0a7b3 50%,#99a1ae);border:1px solid #6482a9;border-bottom:none;border-radius:3px 3px 0 0"></div>
<div class="t " style="left:391px;top:225.19px;font-size:11px;line-height:14px;font-weight:bold;-webkit-text-stroke:.35px #0f2c60;color:#0f2c60;transform:translateX(-50%)">Module Access</div>
<div class="a" style="left:448px;top:221px;width:110px;height:20px;background:linear-gradient(#98a2b2,#8b96a8);border:1px solid #6482a9;border-bottom:none;border-radius:3px 3px 0 0;box-shadow:inset 1px 1px 0 #a9b0bb,inset -1px 0 0 #a9b0bb"></div>
<div class="t " style="left:503px;top:225.19px;font-size:11px;line-height:14px;font-weight:bold;-webkit-text-stroke:.35px #1d3c6c;color:#1d3c6c;transform:translateX(-50%)">Address</div>
<div class="a" style="left:560px;top:221px;width:110px;height:20px;background:linear-gradient(#98a2b2,#8b96a8);border:1px solid #6482a9;border-bottom:none;border-radius:3px 3px 0 0;box-shadow:inset 1px 1px 0 #a9b0bb,inset -1px 0 0 #a9b0bb"></div>
<div class="t " style="left:615px;top:225.19px;font-size:11px;line-height:14px;font-weight:bold;-webkit-text-stroke:.35px #1d3c6c;color:#1d3c6c;transform:translateX(-50%)">Account Details</div>
<div class="a" style="left:672px;top:221px;width:110px;height:20px;background:linear-gradient(#98a2b2,#8b96a8);border:1px solid #6482a9;border-bottom:none;border-radius:3px 3px 0 0;box-shadow:inset 1px 1px 0 #a9b0bb,inset -1px 0 0 #a9b0bb"></div>
<div class="t " style="left:727px;top:225.19px;font-size:11px;line-height:14px;font-weight:bold;-webkit-text-stroke:.35px #1d3c6c;color:#1d3c6c;transform:translateX(-50%)">Email</div>
<div class="a" style="left:784px;top:221px;width:73px;height:20px;background:linear-gradient(#98a2b2,#8b96a8);border:1px solid #6482a9;border-right:none;border-bottom:none;border-radius:3px 0 0 0"></div>
<div class="t " style="left:825.5px;top:225.19px;font-size:11px;line-height:14px;font-weight:bold;-webkit-text-stroke:.35px #1d3c6c;color:#1d3c6c;">Print</div>
<div class="a" style="left:857px;top:221px;width:18px;height:20px;background:linear-gradient(#98a1af,#8c96a7);border-left:1px solid #7c90ae"></div>
<svg style="left:861px;top:227px;" width="11" height="9" viewBox="0 0 11 9"><path d="M11 4.5 L6.5 0 V3 H0 V6 H6.5 V9 Z" fill="#2a4d7c"/></svg>
<div class="t " style="left:96.5px;top:253.34px;font-size:12px;line-height:15px;color:#111;">System Configuration Module:</div>
<div class="t " style="left:96.5px;top:280.34px;font-size:12px;line-height:15px;color:#111;">General Ledger Module:</div>
<div class="t " style="left:96.5px;top:307.34px;font-size:12px;line-height:15px;color:#111;">Debtors Module:</div>
<div class="t " style="left:96.5px;top:334.34px;font-size:12px;line-height:15px;color:#111;">Creditors Module:</div>
<div class="t " style="left:96.5px;top:361.34px;font-size:12px;line-height:15px;color:#111;">Inventory Management:</div>
<div class="t " style="left:96.5px;top:388.34px;font-size:12px;line-height:15px;color:#111;">Job costing Module:</div>
<div class="t " style="left:96.5px;top:415.34px;font-size:12px;line-height:15px;color:#111;">Energy Module:</div>
<div class="a" style="left:90px;top:441px;width:126px;height:1px;background:#6e7482"></div>
<div class="t " style="left:111.5px;top:455.84px;font-size:12px;line-height:15px;color:#111;">Allow Multiple Module:</div>
<div class="t " style="left:111.5px;top:477.84px;font-size:12px;line-height:15px;color:#111;">Show Column Selector:</div>
<div class="t " style="left:111.5px;top:499.84px;font-size:12px;line-height:15px;color:#111;">View Security Button:</div>
<div class="t " style="left:111.5px;top:521.84px;font-size:12px;line-height:15px;color:#111;">Allow Statement Export:</div>
<div class="t " style="left:111.5px;top:543.84px;font-size:12px;line-height:15px;color:#111;">Storeman:</div>
<div class="t " style="left:111.5px;top:565.84px;font-size:12px;line-height:15px;color:#111;">Change Control Manager:</div>
<div class="t " style="left:111.5px;top:587.84px;font-size:12px;line-height:15px;color:#111;">Supplier Bank Acct.:</div>
<div class="t " style="left:111.5px;top:612.84px;font-size:12px;line-height:15px;color:#111;">Sales Order Status:</div>
<div class="t " style="left:111.5px;top:639.84px;font-size:12px;line-height:15px;color:#111;">Default Favourites Page:</div>
<div class="t " style="left:111.5px;top:666.34px;font-size:12px;line-height:15px;color:#111;">Module Dashboard:</div>
<div class="a" style="left:90px;top:694px;width:126px;height:40px;background:#8d94a5;border-top:1px solid #6f87aa"></div>
<div class="a" style="left:101px;top:705px;width:75px;height:22px;background:linear-gradient(#a9abaf,#a4a6aa 50%,#9b9da1 51%,#9fa1a5);border:1px solid #868a92;border-radius:2px"></div>
<svg style="left:104px;top:708px;" width="16" height="16" viewBox="0 0 16 16"><path d="M0 0 H13 L16 3 V16 H0 Z" fill="#1f64b4"/><rect x="4" y="0" width="7" height="5" fill="#a4a6aa"/><rect x="8" y="1" width="2" height="3" fill="#1f64b4"/><rect x="2.5" y="8.5" width="11" height="7.5" fill="#a6a8ac"/></svg>
<div class="t " style="left:135.5px;top:708.69px;font-size:11px;line-height:14px;color:#262a30;letter-spacing:-.3px">Save</div>
<div class="a" style="left:188px;top:705px;width:40px;height:22px;background:linear-gradient(#a9abaf,#a4a6aa 50%,#9b9da1 51%,#9fa1a5);border:1px solid #868a92;border-radius:2px"></div>
<svg style="left:190px;top:708px;" width="15" height="15" viewBox="0 0 15 15"><path d="M4.6 .6 H10.4 L14.4 4.6 V10.4 L10.4 14.4 H4.6 L.6 10.4 V4.6 Z" fill="#b8442e" stroke="#8a2e1c" stroke-width="1.1"/><path d="M4.8 4.8 L10.2 10.2 M10.2 4.8 L4.8 10.2" stroke="#d0d0d0" stroke-width="2.3" stroke-linecap="round"/></svg>
<svg width="0" height="0" style="position:absolute"><defs><linearGradient id="cbg" x1="0" y1="0" x2="1" y2="1"><stop offset="0" stop-color="#cfd4db"/><stop offset="1" stop-color="#f6f6f6"/></linearGradient></defs></svg>
<div class="a" style="left:216px;top:247px;width:900px;height:640px;background:#5fa0dc"></div>
<div class="t " style="left:231.5px;top:259.32px;font-size:16.4px;line-height:20px;color:#eaf0f7;letter-spacing:.17px">Edit Mobile Role</div>
<svg style="left:1086px;top:263px;" width="12" height="12" viewBox="0 0 12 12"><path d="M2 2 L10 10 M10 2 L2 10" stroke="#e2ecf7" stroke-width="3.3" stroke-linecap="round"/></svg>
<div class="a" style="left:223px;top:288px;width:890px;height:580px;background:#d9e0f7"></div>
<div class="a" style="left:223px;top:288px;width:890px;height:25px;background:linear-gradient(#e1ebf7,#d6e3f4 40%,#bdd1ee 42%,#d0e0f4);border-top:1px solid #fff;border-bottom:1px solid #99bbe8"></div>
<div class="t " style="left:229.5px;top:293.05px;font-size:11.4px;line-height:14px;font-weight:bold;-webkit-text-stroke:.35px #15428b;color:#15428b;">Mobile Security</div>
<div class="a" style="left:1055px;top:293px;width:14px;height:14px;background:linear-gradient(#f4f8fd,#d4e3f6);border:1px solid #a9c4e8;border-radius:3px"></div>
<div class="a" style="left:1072px;top:293px;width:14px;height:14px;background:linear-gradient(#f4f8fd,#d4e3f6);border:1px solid #a9c4e8;border-radius:3px"></div>
<div class="a" style="left:1089px;top:293px;width:14px;height:14px;background:linear-gradient(#f4f8fd,#d4e3f6);border:1px solid #a9c4e8;border-radius:3px"></div>
<svg style="left:1057px;top:295px;" width="10" height="10" viewBox="0 0 10 10"><g fill="#6872c0"><circle cx="5" cy="5" r="3.5"/><rect x="4.1" y=".4" width="1.8" height="2.4" rx=".6" transform="rotate(0 5 5)"/><rect x="4.1" y=".4" width="1.8" height="2.4" rx=".6" transform="rotate(45 5 5)"/><rect x="4.1" y=".4" width="1.8" height="2.4" rx=".6" transform="rotate(90 5 5)"/><rect x="4.1" y=".4" width="1.8" height="2.4" rx=".6" transform="rotate(135 5 5)"/><rect x="4.1" y=".4" width="1.8" height="2.4" rx=".6" transform="rotate(180 5 5)"/><rect x="4.1" y=".4" width="1.8" height="2.4" rx=".6" transform="rotate(225 5 5)"/><rect x="4.1" y=".4" width="1.8" height="2.4" rx=".6" transform="rotate(270 5 5)"/><rect x="4.1" y=".4" width="1.8" height="2.4" rx=".6" transform="rotate(315 5 5)"/></g><circle cx="5" cy="5" r="1.5" fill="#e8f0fa"/></svg>
<svg style="left:1074px;top:295px;" width="10" height="10" viewBox="0 0 10 10"><path d="M1.5 5 V4 A2.5 2.5 0 0 1 4 1.5 H7" fill="none" stroke="#3a6eb0" stroke-width="1.6"/><path d="M6 -.5 L9 1.5 L6 3.5 Z" fill="#3a6eb0"/><path d="M8.5 4 V5 A2.5 2.5 0 0 1 6 7.5 H3" fill="none" stroke="#3a6eb0" stroke-width="1.6"/><path d="M4 5.5 L1 7.5 L4 9.5 Z" fill="#3a6eb0"/></svg>
<div class="t " style="left:1092.5px;top:294.19px;font-size:11px;line-height:14px;font-weight:bold;-webkit-text-stroke:.35px #3a6eb0;color:#3a6eb0;">?</div>
<div class="a" style="left:1047px;top:318px;width:56px;height:22px;background:linear-gradient(#fdfdfd,#f2f2f2 50%,#e4e4e4 51%,#ececec);border:1px solid #cfd3da;border-radius:2px"></div>
<svg style="left:1050px;top:321px;" width="15" height="15" viewBox="0 0 15 15"><path d="M4.6 .6 H10.4 L14.4 4.6 V10.4 L10.4 14.4 H4.6 L.6 10.4 V4.6 Z" fill="#e2472f" stroke="#b52f1c" stroke-width="1.1"/><path d="M4.8 4.8 L10.2 10.2 M10.2 4.8 L4.8 10.2" stroke="#fff" stroke-width="2.3" stroke-linecap="round"/></svg>
<div class="t " style="left:1070px;top:321.69px;font-size:11px;line-height:14px;color:#333;letter-spacing:-.4px">Close</div>
<div class="a" style="left:229px;top:345px;width:874px;height:515px;background:#d9e0f7;border:1px solid #99bbe8"></div>
<div class="a" style="left:230px;top:346px;width:872px;height:22px;background:linear-gradient(#e1e9f5,#cedcf0)"></div>
<div class="a" style="left:230px;top:367px;width:872px;height:1px;background:#99bbe8"></div>
<div class="a" style="left:230px;top:368px;width:872px;height:2px;background:#deecfd"></div>
<div class="a" style="left:230px;top:370px;width:872px;height:1px;background:#99bbe8"></div>
<div class="a" style="left:232px;top:347px;width:100px;height:23px;background:linear-gradient(#ffffff,#e4eefb 40%,#deebfb);border:1px solid #99bbe8;border-bottom:none;border-radius:3px 3px 0 0;box-shadow:inset 1px 1px 0 #fff,inset -1px 0 0 #fff"></div>
<div class="t " style="left:265.5px;top:351.05px;font-size:11.4px;line-height:14px;font-weight:bold;-webkit-text-stroke:.35px #15428b;color:#15428b;letter-spacing:.6px">Items</div>
<div class="a" style="left:334px;top:347px;width:100px;height:21px;background:linear-gradient(#eaf1fb,#c9dcf4 8%,#d5e4f7 40%,#dfeafa);border:1px solid #99bbe8;border-bottom:none;border-radius:3px 3px 0 0;box-shadow:inset 1px 1px 0 #fff,inset -1px 0 0 #fff"></div>
<div class="t " style="left:365.5px;top:351.05px;font-size:11.4px;line-height:14px;font-weight:bold;-webkit-text-stroke:.35px #35588f;color:#35588f;">Menus</div>
<div class="t " style="left:235.5px;top:379.34px;font-size:12px;line-height:15px;color:#000;">Role Name:</div>
<div class="a" style="left:340px;top:376px;width:215px;height:22px;background:linear-gradient(#eceeee,#fff 45%);border:1px solid #b5b8c8"></div>
<div class="t " style="left:343.5px;top:381.34px;font-size:12px;line-height:15px;color:#000;word-spacing:-1px">Mobile Full Access Security</div>
<div class="t " style="left:580.5px;top:379.34px;font-size:12px;line-height:15px;color:#000;">Group Menus:</div>
<svg style="left:685px;top:380px;" width="13" height="13" viewBox="0 0 13 13"><rect x=".5" y=".5" width="12" height="12" fill="#fafafa" stroke="#868686"/><rect x="2" y="2" width="9" height="9" fill="url(#cbg)"/><path d="M3.3 7.2 L5.9 10.3 L9.6 2.6" fill="none" stroke="#3b53a0" stroke-width="1.9" stroke-linejoin="round"/></svg>
<div class="a" style="left:960px;top:377px;width:57px;height:21px;background:linear-gradient(#fdfdfd,#f2f2f2 50%,#e6e6e6 51%,#eeeeee);border:1px solid #d0d3da;border-radius:2px"></div>
<div class="t " style="left:966px;top:380.19px;font-size:11px;line-height:14px;color:#333;letter-spacing:-.2px">Select All</div>
<div class="a" style="left:1023px;top:377px;width:72px;height:21px;background:linear-gradient(#fdfdfd,#f2f2f2 50%,#e6e6e6 51%,#eeeeee);border:1px solid #d0d3da;border-radius:2px"></div>
<div class="t " style="left:1029px;top:380.19px;font-size:11px;line-height:14px;color:#333;letter-spacing:-.2px">Select None</div>
<div class="t " style="left:235px;top:406.34px;font-size:12px;line-height:15px;font-weight:bold;color:#000;text-decoration:underline">Asset Tracker:</div>
<div class="t " style="left:240.5px;top:425.34px;font-size:12px;line-height:15px;color:#000;">Asset:</div>
<svg style="left:455px;top:426px;" width="13" height="13" viewBox="0 0 13 13"><rect x=".5" y=".5" width="12" height="12" fill="#fafafa" stroke="#868686"/><rect x="2" y="2" width="9" height="9" fill="url(#cbg)"/><path d="M3.3 7.2 L5.9 10.3 L9.6 2.6" fill="none" stroke="#3b53a0" stroke-width="1.9" stroke-linejoin="round"/></svg>
<div class="t " style="left:240.5px;top:442.34px;font-size:12px;line-height:15px;color:#000;">Asset Actions:</div>
<svg style="left:455px;top:443px;" width="13" height="13" viewBox="0 0 13 13"><rect x=".5" y=".5" width="12" height="12" fill="#fafafa" stroke="#868686"/><rect x="2" y="2" width="9" height="9" fill="url(#cbg)"/><path d="M3.3 7.2 L5.9 10.3 L9.6 2.6" fill="none" stroke="#3b53a0" stroke-width="1.9" stroke-linejoin="round"/></svg>
<div class="t " style="left:240.5px;top:459.34px;font-size:12px;line-height:15px;color:#000;">Asset Scan Print:</div>
<svg style="left:455px;top:460px;" width="13" height="13" viewBox="0 0 13 13"><rect x=".5" y=".5" width="12" height="12" fill="#fafafa" stroke="#868686"/><rect x="2" y="2" width="9" height="9" fill="url(#cbg)"/><path d="M3.3 7.2 L5.9 10.3 L9.6 2.6" fill="none" stroke="#3b53a0" stroke-width="1.9" stroke-linejoin="round"/></svg>
<div class="t " style="left:240.5px;top:476.34px;font-size:12px;line-height:15px;color:#000;">Asset Audit:</div>
<svg style="left:455px;top:477px;" width="13" height="13" viewBox="0 0 13 13"><rect x=".5" y=".5" width="12" height="12" fill="#fafafa" stroke="#868686"/><rect x="2" y="2" width="9" height="9" fill="url(#cbg)"/><path d="M3.3 7.2 L5.9 10.3 L9.6 2.6" fill="none" stroke="#3b53a0" stroke-width="1.9" stroke-linejoin="round"/></svg>
<div class="t " style="left:235px;top:498.34px;font-size:12px;line-height:15px;font-weight:bold;color:#000;text-decoration:underline">Client:</div>
<div class="t " style="left:240.5px;top:517.34px;font-size:12px;line-height:15px;color:#000;">Client Info:</div>
<svg style="left:455px;top:518px;" width="13" height="13" viewBox="0 0 13 13"><rect x=".5" y=".5" width="12" height="12" fill="#fafafa" stroke="#868686"/><rect x="2" y="2" width="9" height="9" fill="url(#cbg)"/><path d="M3.3 7.2 L5.9 10.3 L9.6 2.6" fill="none" stroke="#3b53a0" stroke-width="1.9" stroke-linejoin="round"/></svg>
<div class="t " style="left:240.5px;top:534.34px;font-size:12px;line-height:15px;color:#000;">Client Visit:</div>
<svg style="left:455px;top:535px;" width="13" height="13" viewBox="0 0 13 13"><rect x=".5" y=".5" width="12" height="12" fill="#fafafa" stroke="#868686"/><rect x="2" y="2" width="9" height="9" fill="url(#cbg)"/><path d="M3.3 7.2 L5.9 10.3 L9.6 2.6" fill="none" stroke="#3b53a0" stroke-width="1.9" stroke-linejoin="round"/></svg>
<div class="t " style="left:240.5px;top:551.34px;font-size:12px;line-height:15px;color:#000;">New Client:</div>
<svg style="left:455px;top:552px;" width="13" height="13" viewBox="0 0 13 13"><rect x=".5" y=".5" width="12" height="12" fill="#fafafa" stroke="#868686"/><rect x="2" y="2" width="9" height="9" fill="url(#cbg)"/><path d="M3.3 7.2 L5.9 10.3 L9.6 2.6" fill="none" stroke="#3b53a0" stroke-width="1.9" stroke-linejoin="round"/></svg>
<div class="t " style="left:235px;top:573.34px;font-size:12px;line-height:15px;font-weight:bold;color:#000;text-decoration:underline">Financial:</div>
<div class="t " style="left:240.5px;top:592.34px;font-size:12px;line-height:15px;color:#000;">Approvals:</div>
<svg style="left:455px;top:593px;" width="13" height="13" viewBox="0 0 13 13"><rect x=".5" y=".5" width="12" height="12" fill="#fafafa" stroke="#868686"/><rect x="2" y="2" width="9" height="9" fill="url(#cbg)"/><path d="M3.3 7.2 L5.9 10.3 L9.6 2.6" fill="none" stroke="#3b53a0" stroke-width="1.9" stroke-linejoin="round"/></svg>
<div class="t " style="left:240.5px;top:609.34px;font-size:12px;line-height:15px;color:#000;">Expenses:</div>
<svg style="left:455px;top:610px;" width="13" height="13" viewBox="0 0 13 13"><rect x=".5" y=".5" width="12" height="12" fill="#fafafa" stroke="#868686"/><rect x="2" y="2" width="9" height="9" fill="url(#cbg)"/><path d="M3.3 7.2 L5.9 10.3 L9.6 2.6" fill="none" stroke="#3b53a0" stroke-width="1.9" stroke-linejoin="round"/></svg>
<div class="t " style="left:240.5px;top:626.34px;font-size:12px;line-height:15px;color:#000;">Purchase Order:</div>
<svg style="left:455px;top:627px;" width="13" height="13" viewBox="0 0 13 13"><rect x=".5" y=".5" width="12" height="12" fill="#fafafa" stroke="#868686"/><rect x="2" y="2" width="9" height="9" fill="url(#cbg)"/><path d="M3.3 7.2 L5.9 10.3 L9.6 2.6" fill="none" stroke="#3b53a0" stroke-width="1.9" stroke-linejoin="round"/></svg>
<div class="t " style="left:235px;top:648.34px;font-size:12px;line-height:15px;font-weight:bold;color:#000;text-decoration:underline">Sales:</div>
<div class="t " style="left:240.5px;top:667.34px;font-size:12px;line-height:15px;color:#000;">Statistics:</div>
<svg style="left:455px;top:668px;" width="13" height="13" viewBox="0 0 13 13"><rect x=".5" y=".5" width="12" height="12" fill="#fafafa" stroke="#868686"/><rect x="2" y="2" width="9" height="9" fill="url(#cbg)"/><path d="M3.3 7.2 L5.9 10.3 L9.6 2.6" fill="none" stroke="#3b53a0" stroke-width="1.9" stroke-linejoin="round"/></svg>
<div class="t " style="left:240.5px;top:684.34px;font-size:12px;line-height:15px;color:#000;">Brand Activity Report:</div>
<svg style="left:455px;top:685px;" width="13" height="13" viewBox="0 0 13 13"><rect x=".5" y=".5" width="12" height="12" fill="#fafafa" stroke="#868686"/><rect x="2" y="2" width="9" height="9" fill="url(#cbg)"/><path d="M3.3 7.2 L5.9 10.3 L9.6 2.6" fill="none" stroke="#3b53a0" stroke-width="1.9" stroke-linejoin="round"/></svg>
<div class="t " style="left:240.5px;top:701.34px;font-size:12px;line-height:15px;color:#000;">Activity Report:</div>
<svg style="left:455px;top:702px;" width="13" height="13" viewBox="0 0 13 13"><rect x=".5" y=".5" width="12" height="12" fill="#fafafa" stroke="#868686"/><rect x="2" y="2" width="9" height="9" fill="url(#cbg)"/><path d="M3.3 7.2 L5.9 10.3 L9.6 2.6" fill="none" stroke="#3b53a0" stroke-width="1.9" stroke-linejoin="round"/></svg>
<div class="t " style="left:240.5px;top:718.34px;font-size:12px;line-height:15px;color:#000;">Quotes:</div>
<svg style="left:455px;top:719px;" width="13" height="13" viewBox="0 0 13 13"><rect x=".5" y=".5" width="12" height="12" fill="#fafafa" stroke="#868686"/><rect x="2" y="2" width="9" height="9" fill="url(#cbg)"/><path d="M3.3 7.2 L5.9 10.3 L9.6 2.6" fill="none" stroke="#3b53a0" stroke-width="1.9" stroke-linejoin="round"/></svg>
<div class="t " style="left:240.5px;top:735.34px;font-size:12px;line-height:15px;color:#000;">Invoice:</div>
<svg style="left:455px;top:736px;" width="13" height="13" viewBox="0 0 13 13"><rect x=".5" y=".5" width="12" height="12" fill="#fafafa" stroke="#868686"/><rect x="2" y="2" width="9" height="9" fill="url(#cbg)"/><path d="M3.3 7.2 L5.9 10.3 L9.6 2.6" fill="none" stroke="#3b53a0" stroke-width="1.9" stroke-linejoin="round"/></svg>
<div class="t " style="left:240.5px;top:752.34px;font-size:12px;line-height:15px;color:#000;">Reminders:</div>
<svg style="left:455px;top:753px;" width="13" height="13" viewBox="0 0 13 13"><rect x=".5" y=".5" width="12" height="12" fill="#fafafa" stroke="#868686"/><rect x="2" y="2" width="9" height="9" fill="url(#cbg)"/><path d="M3.3 7.2 L5.9 10.3 L9.6 2.6" fill="none" stroke="#3b53a0" stroke-width="1.9" stroke-linejoin="round"/></svg>
<div class="t " style="left:240.5px;top:769.34px;font-size:12px;line-height:15px;color:#000;">Sales Leads:</div>
<svg style="left:455px;top:770px;" width="13" height="13" viewBox="0 0 13 13"><rect x=".5" y=".5" width="12" height="12" fill="#fafafa" stroke="#868686"/><rect x="2" y="2" width="9" height="9" fill="url(#cbg)"/><path d="M3.3 7.2 L5.9 10.3 L9.6 2.6" fill="none" stroke="#3b53a0" stroke-width="1.9" stroke-linejoin="round"/></svg>
<div class="t " style="left:240.5px;top:786.34px;font-size:12px;line-height:15px;color:#000;">Quick Sales:</div>
<svg style="left:455px;top:787px;" width="13" height="13" viewBox="0 0 13 13"><rect x=".5" y=".5" width="12" height="12" fill="#fafafa" stroke="#868686"/><rect x="2" y="2" width="9" height="9" fill="url(#cbg)"/><path d="M3.3 7.2 L5.9 10.3 L9.6 2.6" fill="none" stroke="#3b53a0" stroke-width="1.9" stroke-linejoin="round"/></svg>
<div class="t " style="left:521.5px;top:406.34px;font-size:12px;line-height:15px;font-weight:bold;color:#000;text-decoration:underline">Stock:</div>
<div class="t " style="left:526.5px;top:425.34px;font-size:12px;line-height:15px;color:#000;">Book In:</div>
<svg style="left:741px;top:426px;" width="13" height="13" viewBox="0 0 13 13"><rect x=".5" y=".5" width="12" height="12" fill="#fafafa" stroke="#868686"/><rect x="2" y="2" width="9" height="9" fill="url(#cbg)"/><path d="M3.3 7.2 L5.9 10.3 L9.6 2.6" fill="none" stroke="#3b53a0" stroke-width="1.9" stroke-linejoin="round"/></svg>
<div class="t " style="left:526.5px;top:442.34px;font-size:12px;line-height:15px;color:#000;">Inventory:</div>
<svg style="left:741px;top:443px;" width="13" height="13" viewBox="0 0 13 13"><rect x=".5" y=".5" width="12" height="12" fill="#fafafa" stroke="#868686"/><rect x="2" y="2" width="9" height="9" fill="url(#cbg)"/><path d="M3.3 7.2 L5.9 10.3 L9.6 2.6" fill="none" stroke="#3b53a0" stroke-width="1.9" stroke-linejoin="round"/></svg>
<div class="t " style="left:526.5px;top:459.34px;font-size:12px;line-height:15px;color:#000;">Barcode Count:</div>
<svg style="left:741px;top:460px;" width="13" height="13" viewBox="0 0 13 13"><rect x=".5" y=".5" width="12" height="12" fill="#fafafa" stroke="#868686"/><rect x="2" y="2" width="9" height="9" fill="url(#cbg)"/><path d="M3.3 7.2 L5.9 10.3 L9.6 2.6" fill="none" stroke="#3b53a0" stroke-width="1.9" stroke-linejoin="round"/></svg>
<div class="t " style="left:526.5px;top:476.34px;font-size:12px;line-height:15px;color:#000;">Stock Count:</div>
<svg style="left:741px;top:477px;" width="13" height="13" viewBox="0 0 13 13"><rect x=".5" y=".5" width="12" height="12" fill="#fafafa" stroke="#868686"/><rect x="2" y="2" width="9" height="9" fill="url(#cbg)"/><path d="M3.3 7.2 L5.9 10.3 L9.6 2.6" fill="none" stroke="#3b53a0" stroke-width="1.9" stroke-linejoin="round"/></svg>
<div class="t " style="left:526.5px;top:493.34px;font-size:12px;line-height:15px;color:#000;">Stock Transfer:</div>
<svg style="left:741px;top:494px;" width="13" height="13" viewBox="0 0 13 13"><rect x=".5" y=".5" width="12" height="12" fill="#fafafa" stroke="#868686"/><rect x="2" y="2" width="9" height="9" fill="url(#cbg)"/><path d="M3.3 7.2 L5.9 10.3 L9.6 2.6" fill="none" stroke="#3b53a0" stroke-width="1.9" stroke-linejoin="round"/></svg>
<div class="t " style="left:526.5px;top:510.34px;font-size:12px;line-height:15px;color:#000;">Location Transfer:</div>
<svg style="left:741px;top:511px;" width="13" height="13" viewBox="0 0 13 13"><rect x=".5" y=".5" width="12" height="12" fill="#fafafa" stroke="#868686"/><rect x="2" y="2" width="9" height="9" fill="url(#cbg)"/><path d="M3.3 7.2 L5.9 10.3 L9.6 2.6" fill="none" stroke="#3b53a0" stroke-width="1.9" stroke-linejoin="round"/></svg>
<div class="t " style="left:526.5px;top:527.34px;font-size:12px;line-height:15px;color:#000;">Stock Request:</div>
<svg style="left:741px;top:528px;" width="13" height="13" viewBox="0 0 13 13"><rect x=".5" y=".5" width="12" height="12" fill="#fafafa" stroke="#868686"/><rect x="2" y="2" width="9" height="9" fill="url(#cbg)"/><path d="M3.3 7.2 L5.9 10.3 L9.6 2.6" fill="none" stroke="#3b53a0" stroke-width="1.9" stroke-linejoin="round"/></svg>
<div class="t " style="left:526.5px;top:544.34px;font-size:12px;line-height:15px;color:#000;">Pick Sales Order:</div>
<svg style="left:741px;top:545px;" width="13" height="13" viewBox="0 0 13 13"><rect x=".5" y=".5" width="12" height="12" fill="#fafafa" stroke="#868686"/><rect x="2" y="2" width="9" height="9" fill="url(#cbg)"/><path d="M3.3 7.2 L5.9 10.3 L9.6 2.6" fill="none" stroke="#3b53a0" stroke-width="1.9" stroke-linejoin="round"/></svg>
<div class="t " style="left:526.5px;top:561.34px;font-size:12px;line-height:15px;color:#000;">Receive Purchase Order:</div>
<svg style="left:741px;top:562px;" width="13" height="13" viewBox="0 0 13 13"><rect x=".5" y=".5" width="12" height="12" fill="#fafafa" stroke="#868686"/><rect x="2" y="2" width="9" height="9" fill="url(#cbg)"/><path d="M3.3 7.2 L5.9 10.3 L9.6 2.6" fill="none" stroke="#3b53a0" stroke-width="1.9" stroke-linejoin="round"/></svg>
<div class="t " style="left:526.5px;top:578.34px;font-size:12px;line-height:15px;color:#000;">Weight Change:</div>
<svg style="left:741px;top:579px;" width="13" height="13" viewBox="0 0 13 13"><rect x=".5" y=".5" width="12" height="12" fill="#fafafa" stroke="#868686"/><rect x="2" y="2" width="9" height="9" fill="url(#cbg)"/><path d="M3.3 7.2 L5.9 10.3 L9.6 2.6" fill="none" stroke="#3b53a0" stroke-width="1.9" stroke-linejoin="round"/></svg>
<div class="t " style="left:522px;top:633.84px;font-size:12px;line-height:15px;font-weight:bold;color:#000;text-decoration:underline">Job Costing:</div>
<div class="t " style="left:527px;top:653.34px;font-size:12px;line-height:15px;color:#000;">Staff Schedule:</div>
<svg style="left:742px;top:654px;" width="13" height="13" viewBox="0 0 13 13"><rect x=".5" y=".5" width="12" height="12" fill="#fafafa" stroke="#868686"/><rect x="2" y="2" width="9" height="9" fill="url(#cbg)"/><path d="M3.3 7.2 L5.9 10.3 L9.6 2.6" fill="none" stroke="#3b53a0" stroke-width="1.9" stroke-linejoin="round"/></svg>
<div class="t " style="left:527px;top:670.34px;font-size:12px;line-height:15px;color:#000;">Job Lines:</div>
<svg style="left:742px;top:671px;" width="13" height="13" viewBox="0 0 13 13"><rect x=".5" y=".5" width="12" height="12" fill="#fafafa" stroke="#868686"/><rect x="2" y="2" width="9" height="9" fill="url(#cbg)"/><path d="M3.3 7.2 L5.9 10.3 L9.6 2.6" fill="none" stroke="#3b53a0" stroke-width="1.9" stroke-linejoin="round"/></svg>
<div class="t " style="left:522px;top:692.34px;font-size:12px;line-height:15px;font-weight:bold;color:#000;text-decoration:underline">Support:</div>
<div class="t " style="left:527px;top:711.34px;font-size:12px;line-height:15px;color:#000;">Checklist:</div>
<svg style="left:742px;top:712px;" width="13" height="13" viewBox="0 0 13 13"><rect x=".5" y=".5" width="12" height="12" fill="#fafafa" stroke="#868686"/><rect x="2" y="2" width="9" height="9" fill="url(#cbg)"/><path d="M3.3 7.2 L5.9 10.3 L9.6 2.6" fill="none" stroke="#3b53a0" stroke-width="1.9" stroke-linejoin="round"/></svg>
<div class="t " style="left:527px;top:728.34px;font-size:12px;line-height:15px;color:#000;">Problem Log:</div>
<svg style="left:742px;top:729px;" width="13" height="13" viewBox="0 0 13 13"><rect x=".5" y=".5" width="12" height="12" fill="#fafafa" stroke="#868686"/><rect x="2" y="2" width="9" height="9" fill="url(#cbg)"/><path d="M3.3 7.2 L5.9 10.3 L9.6 2.6" fill="none" stroke="#3b53a0" stroke-width="1.9" stroke-linejoin="round"/></svg>
<div class="t " style="left:522px;top:750.34px;font-size:12px;line-height:15px;font-weight:bold;color:#000;text-decoration:underline">Time Tracker:</div>
<div class="t " style="left:527px;top:769.34px;font-size:12px;line-height:15px;color:#000;">Time Tracker:</div>
<svg style="left:742px;top:770px;" width="13" height="13" viewBox="0 0 13 13"><rect x=".5" y=".5" width="12" height="12" fill="#fafafa" stroke="#868686"/><rect x="2" y="2" width="9" height="9" fill="url(#cbg)"/><path d="M3.3 7.2 L5.9 10.3 L9.6 2.6" fill="none" stroke="#3b53a0" stroke-width="1.9" stroke-linejoin="round"/></svg>
<div class="t " style="left:527px;top:786.34px;font-size:12px;line-height:15px;color:#000;">Set Quick Time Bill Qty only:</div>
<svg style="left:742px;top:787px;" width="13" height="13" viewBox="0 0 13 13"><rect x=".5" y=".5" width="12" height="12" fill="#fafafa" stroke="#868686"/><rect x="2" y="2" width="9" height="9" fill="url(#cbg)"/><path d="M3.3 7.2 L5.9 10.3 L9.6 2.6" fill="none" stroke="#3b53a0" stroke-width="1.9" stroke-linejoin="round"/></svg>
<div class="t " style="left:807px;top:406.34px;font-size:12px;line-height:15px;font-weight:bold;color:#000;text-decoration:underline">Production Tracking:</div>
<div class="t " style="left:812px;top:425.34px;font-size:12px;line-height:15px;color:#000;">Job Item Tracking:</div>
<svg style="left:1027px;top:426px;" width="13" height="13" viewBox="0 0 13 13"><rect x=".5" y=".5" width="12" height="12" fill="#fafafa" stroke="#868686"/><rect x="2" y="2" width="9" height="9" fill="url(#cbg)"/><path d="M3.3 7.2 L5.9 10.3 L9.6 2.6" fill="none" stroke="#3b53a0" stroke-width="1.9" stroke-linejoin="round"/></svg>
<div class="t " style="left:812px;top:442.34px;font-size:12px;line-height:15px;color:#000;">Production Tracking Actions:</div>
<svg style="left:1027px;top:443px;" width="13" height="13" viewBox="0 0 13 13"><rect x=".5" y=".5" width="12" height="12" fill="#fafafa" stroke="#868686"/><rect x="2" y="2" width="9" height="9" fill="url(#cbg)"/><path d="M3.3 7.2 L5.9 10.3 L9.6 2.6" fill="none" stroke="#3b53a0" stroke-width="1.9" stroke-linejoin="round"/></svg>
<div class="t " style="left:812px;top:459.34px;font-size:12px;line-height:15px;color:#000;">Job Item Location Audit:</div>
<svg style="left:1027px;top:460px;" width="13" height="13" viewBox="0 0 13 13"><rect x=".5" y=".5" width="12" height="12" fill="#fafafa" stroke="#868686"/><rect x="2" y="2" width="9" height="9" fill="url(#cbg)"/><path d="M3.3 7.2 L5.9 10.3 L9.6 2.6" fill="none" stroke="#3b53a0" stroke-width="1.9" stroke-linejoin="round"/></svg>
<div class="t " style="left:812px;top:476.34px;font-size:12px;line-height:15px;color:#000;">Job Item Scan Print:</div>
<svg style="left:1027px;top:477px;" width="13" height="13" viewBox="0 0 13 13"><rect x=".5" y=".5" width="12" height="12" fill="#fafafa" stroke="#868686"/><rect x="2" y="2" width="9" height="9" fill="url(#cbg)"/><path d="M3.3 7.2 L5.9 10.3 L9.6 2.6" fill="none" stroke="#3b53a0" stroke-width="1.9" stroke-linejoin="round"/></svg>
<div class="a" style="left:504px;top:591px;width:266px;height:36px;border:3px solid #ee3a3d;box-shadow:1px 3px 4px rgba(0,0,0,.28),inset 0 4px 4px -3px rgba(0,0,0,.22),inset -4px 0 4px -3px rgba(0,0,0,.18)"></div>
<div class="t " style="left:520.5px;top:598.50px;font-size:13px;line-height:16px;color:#111;">Stock Level Adjust</div>
<svg style="left:742px;top:601px;" width="13" height="13" viewBox="0 0 13 13"><rect x=".5" y=".5" width="12" height="12" fill="#fafafa" stroke="#868686"/><rect x="2" y="2" width="9" height="9" fill="url(#cbg)"/><path d="M3.3 7.2 L5.9 10.3 L9.6 2.6" fill="none" stroke="#3b53a0" stroke-width="1.9" stroke-linejoin="round"/></svg>
<div class="t " style="left:235px;top:819.34px;font-size:12px;line-height:15px;color:#000;">Max Image Size KB:</div>
<div class="a" style="left:410px;top:816px;width:60px;height:22px;background:linear-gradient(#eceeee,#fff 45%);border:1px solid #b5b8c8"></div>
<div class="t " style="left:414.5px;top:819.67px;font-size:12.5px;line-height:16px;color:#000;letter-spacing:-.3px">99999</div>
<div class="t " style="left:521.5px;top:819.34px;font-size:12px;line-height:15px;color:#000;">Quote Action:</div>
<div class="a" style="left:626px;top:816px;width:130px;height:22px;background:linear-gradient(#eceeee,#fff 45%);border:1px solid #b5b8c8"></div>
<div class="a" style="left:738px;top:817px;width:17px;height:20px;background:linear-gradient(#f2f2f2,#dcdcdc);border-left:1px solid #b5b8c8"></div>
<svg style="left:742px;top:824px;" width="9" height="6" viewBox="0 0 9 6"><path d="M1 1 L4.5 4.5 L8 1" fill="none" stroke="#1e3c8c" stroke-width="2"/></svg>
<div class="t " style="left:630px;top:819.67px;font-size:12.5px;line-height:16px;color:#000;letter-spacing:-.4px">Sales Order</div>
<div class="t " style="left:807.5px;top:819.34px;font-size:12px;line-height:15px;color:#000;">Asset Return Days:</div>
<div class="a" style="left:982px;top:816px;width:60px;height:22px;background:linear-gradient(#eceeee,#fff 45%);border:1px solid #b5b8c8"></div>
<div class="t " style="left:986.5px;top:819.67px;font-size:12.5px;line-height:16px;color:#000;">14</div>
<div class="a" style="left:223px;top:865px;width:890px;height:1px;background:#99bbe8"></div>
<div class="a" style="left:223px;top:866px;width:890px;height:2px;background:#e4e9f8"></div>
</div></body></html>
